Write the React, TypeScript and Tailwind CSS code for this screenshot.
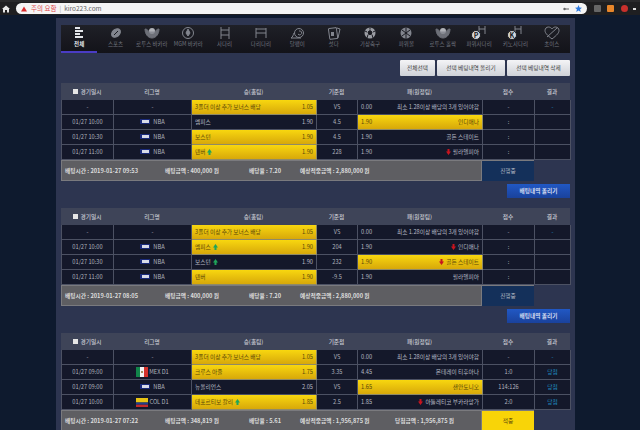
import React from "react";

type Row = {
  time: string;
  league: "NBA" | "MEX" | "COL" | "-";
  home: string;
  homeOdds: string;
  homeMark?: boolean;
  homePick?: boolean;
  line: string;
  awayOdds: string;
  away: string;
  awayMark?: boolean;
  awayPick?: boolean;
  score: string;
  result: string;
};

type Slip = {
  rows: Row[];
  placed: string;
  stake: string;
  rate: string;
  expected: string;
  won?: string;
  status: string;
  hit?: boolean;
};

const bonus: Row = {
  time: "-",
  league: "-",
  home: "3폴더 이상 추가 보너스 배당",
  homeOdds: "1.05",
  homePick: true,
  line: "VS",
  awayOdds: "0.00",
  away: "최소 1.28이상 배당의 3개 있어야함",
  score: "-",
  result: "-",
};

const slips: Slip[] = [
  {
    rows: [
      bonus,
      { time: "01/27 10:00", league: "NBA", home: "멤피스", homeOdds: "1.90", line: "4.5", awayOdds: "1.90", away: "인디애나", awayPick: true, score: ":", result: "" },
      { time: "01/27 10:30", league: "NBA", home: "보스턴", homeOdds: "1.90", homePick: true, line: "4.5", awayOdds: "1.90", away: "골든 스테이트", score: ":", result: "" },
      { time: "01/27 11:00", league: "NBA", home: "덴버", homeOdds: "1.90", homePick: true, homeMark: true, line: "228", awayOdds: "1.90", away: "필라델피아", awayMark: true, score: ":", result: "" },
    ],
    placed: "2019-01-27 09:53",
    stake: "400,000",
    rate: "7.20",
    expected: "2,880,000",
    status: "진행중",
  },
  {
    rows: [
      bonus,
      { time: "01/27 10:00", league: "NBA", home: "멤피스", homeOdds: "1.90", homePick: true, homeMark: true, line: "204", awayOdds: "1.90", away: "인디애나", awayMark: true, score: ":", result: "" },
      { time: "01/27 10:30", league: "NBA", home: "보스턴", homeOdds: "1.90", homeMark: true, line: "232", awayOdds: "1.90", away: "골든 스테이트", awayMark: true, awayPick: true, score: ":", result: "" },
      { time: "01/27 11:00", league: "NBA", home: "덴버", homeOdds: "1.90", homePick: true, line: "-9.5", awayOdds: "1.90", away: "필라델피아", score: ":", result: "" },
    ],
    placed: "2019-01-27 08:05",
    stake: "400,000",
    rate: "7.20",
    expected: "2,880,000",
    status: "진행중",
  },
  {
    rows: [
      bonus,
      { time: "01/27 09:00", league: "MEX", home: "크루스 아줄", homeOdds: "1.75", homePick: true, line: "3.35", awayOdds: "4.45", away: "몬테레이 티후아나", score: "1:0", result: "당첨" },
      { time: "01/27 09:00", league: "NBA", home: "뉴올리언스", homeOdds: "2.05", line: "VS", awayOdds: "1.65", away: "샌안토니오", awayPick: true, score: "114:126", result: "당첨" },
      { time: "01/27 10:00", league: "COL", home: "데포르티보 칼리", homeOdds: "1.85", homePick: true, homeMark: true, line: "2.5", awayOdds: "1.85", away: "아틀레티코 부카라망가", awayMark: true, score: "2:0", result: "당첨" },
    ],
    placed: "2019-01-27 07:22",
    stake: "348,819",
    rate: "5.61",
    expected: "1,956,875",
    won: "1,956,875",
    status: "적중",
    hit: true,
  },
];

const tabs = ["전체", "스포츠", "로투스 바카라", "MGM 바카라", "사다리", "다리다리", "달팽이", "섯다", "가상축구", "파워볼", "로투스 홀짝", "파워사다리", "키노사다리", "초이스"];

const columns = "grid grid-cols-[52px_78px_125px_41px_125px_52px_36px]";

function TabIcon({ i }: { i: number }) {
  const c = i === 0 ? "#e4e6ea" : "#82858e";
  const common = { width: 18, height: 14, viewBox: "0 0 18 14", fill: "none", stroke: c, strokeWidth: 1 };
  switch (i) {
    case 0:
      return (
        <svg {...common} strokeWidth={2}>
          <path d="M5 2h5M5 5h8M5 8h5M5 11h8" />
        </svg>
      );
    case 1:
      return (
        <svg {...common}>
          <ellipse cx="9" cy="7" rx="5" ry="3.6" fill={c} transform="rotate(-40 9 7)" />
          <path d="M7 9l4-4" stroke="#1a1b22" />
        </svg>
      );
    case 2:
    case 10:
      return (
        <svg {...common} width={20} viewBox="0 0 20 14">
          <circle cx="10" cy="5" r="3" fill="#b0b2b8" stroke="none" />
          <path d="M3 3c0 5 3 9 7 9s7-4 7-9c-2 0-3 1-4 3H7C6 4 5 3 3 3z" fill={c} opacity=".8" />
        </svg>
      );
    case 3:
      return (
        <svg {...common}>
          <circle cx="9" cy="7" r="5.5" />
          <path d="M9 3l2 4-2 3-2-3z" fill={c} />
        </svg>
      );
    case 4:
      return (
        <svg {...common}>
          <path d="M5 1v12M13 1v12M5 4h8M5 9h8" />
        </svg>
      );
    case 5:
      return (
        <svg {...common}>
          <path d="M4 2v10M14 2v10M4 7h10M4 3h10" />
        </svg>
      );
    case 6:
      return (
        <svg {...common}>
          <circle cx="11" cy="7" r="4.5" />
          <path d="M3 12h10M3 12c2-1 2-3 3-5M11 5a2 2 0 1 1-1 3" />
        </svg>
      );
    case 7:
      return (
        <svg {...common}>
          <rect x="4" y="2" width="8" height="11" rx="1" transform="rotate(-8 8 7)" />
          <path d="M12 2l3 1-2 9" />
          <path d="M6 6h3v4H6z" fill={c} stroke="none" />
        </svg>
      );
    case 8:
      return (
        <svg {...common}>
          <circle cx="9" cy="7" r="5.5" fill="#9a9ca3" stroke="none" />
          <path d="M9 4.500l2 1.500-.8 2.400H7.800L7 6zM9 1.600v2M4 5l2 1M14 5l-2 1M6 12l1-3.400M12 12l-1-3.400" stroke="#1a1b22" fill="#1a1b22" />
        </svg>
      );
    case 9:
      return (
        <svg {...common}>
          <circle cx="9" cy="7" r="5.5" fill={c} stroke="none" />
          <path d="M5 4l8 6M13 4l-8 6M9 1.500v11" stroke="#1a1b22" />
        </svg>
      );
    case 11:
    case 12:
      return (
        <svg {...common}>
          <path d="M9 0v8M15 0v8M9 3h6" />
          <circle cx="6" cy="9" r="4.500" fill="#d4d6da" stroke="#1a1b22" />
          <text x="6" y="11.500" fontSize="7" fontWeight="700" fill="#1a1b22" stroke="none" textAnchor="middle">
            {i === 11 ? "P" : "K"}
          </text>
        </svg>
      );
    default:
      return (
        <svg {...common}>
          <path d="M9 13C4 9 2 7 2 4.500 2 2.500 3.500 1 5.500 1 7 1 8.300 2 9 3c.7-1 2-2 3.500-2C14.500 1 16 2.500 16 4.500 16 7 14 9 9 13z" />
          <path d="M4 11l10-9" />
        </svg>
      );
  }
}

function LeagueBadge({ league }: { league: Row["league"] }) {
  if (league === "-") return <span>-</span>;
  if (league === "NBA") {
    return (
      <span className="flex items-center gap-[3px]">
        <span className="flex h-[5px] w-[10px] items-center justify-center bg-[#1a2a7a]">
          <span className="h-[3px] w-[7px] bg-[#d8dbe8]" />
        </span>
        <span>NBA</span>
      </span>
    );
  }
  return (
    <span className="flex items-center gap-[1px]">
      {league === "MEX" ? (
        <svg width="12" height="10" viewBox="0 0 12 10">
          <rect width="4" height="10" fill="#12854a" />
          <rect x="4" width="4" height="10" fill="#f2f2f2" />
          <rect x="8" width="4" height="10" fill="#d4322c" />
          <circle cx="6" cy="5" r="1" fill="#8a6a2a" />
        </svg>
      ) : (
        <svg width="12" height="9" viewBox="0 0 12 9">
          <rect width="12" height="4.500" fill="#e8c414" />
          <rect y="4.500" width="12" height="2.200" fill="#1f3f8f" />
          <rect y="6.700" width="12" height="2.300" fill="#c22a2a" />
        </svg>
      )}
      <span>{league === "MEX" ? "MEX D1" : "COL D1"}</span>
    </span>
  );
}

const UpMark = () => (
  <svg width="5" height="6" viewBox="0 0 5 6" className="shrink-0">
    <path d="M2.500 0L5 3.500H3.500V6h-2V3.500H0z" fill="#1fa45a" />
  </svg>
);

const DownMark = () => (
  <svg width="5" height="6" viewBox="0 0 5 6" className="shrink-0">
    <path d="M2.500 6L5 2.500H3.500V0h-2v2.500H0z" fill="#c8141e" />
  </svg>
);

function PickCell({ side, name, odds, mark, pick }: { side: "home" | "away"; name: string; odds: string; mark?: boolean; pick?: boolean }) {
  const tone = pick
    ? "bg-gradient-to-b from-[#f8d70f] to-[#d7a80a] text-[#5a4708] border-[#8f8a66]"
    : "bg-[#14182a] text-[#b8bbc5] border-[#4c5163]";
  return (
    <div className={`flex items-center justify-between border-r border-b px-[3px] ${tone}`}>
      {side === "home" ? (
        <>
          <span className="flex items-center gap-[2px] whitespace-nowrap">
            {name}
            {mark && <UpMark />}
          </span>
          <span>{odds}</span>
        </>
      ) : (
        <>
          <span>{odds}</span>
          <span className="flex items-center gap-[2px] whitespace-nowrap">
            {mark && <DownMark />}
            {name}
          </span>
        </>
      )}
    </div>
  );
}

function Cell({ children }: { children?: React.ReactNode }) {
  return <div className="flex items-center justify-center border-r border-b border-[#4c5163] bg-[#14182a] whitespace-nowrap">{children}</div>;
}

function SlipTable({ slip }: { slip: Slip }) {
  return (
    <section className="text-[5.7px] leading-none text-[#b0b3bd]">
      <div className={`${columns} h-[17px] bg-[#3e4458] font-medium text-[#c8cad2]`}>
        <div className="flex items-center justify-center gap-[3px]">
          <span className="h-[5px] w-[5px] bg-[#e6e6e6]" />
          경기일시
        </div>
        <div className="flex items-center justify-center">리그명</div>
        <div className="flex items-center justify-center">승(홈팀)</div>
        <div className="flex items-center justify-center">기준점</div>
        <div className="flex items-center justify-center">패(원정팀)</div>
        <div className="flex items-center justify-center">점수</div>
        <div className="flex items-center justify-center">결과</div>
      </div>
      {slip.rows.map((r, i) => (
        <div key={i} className={`${columns} h-[15px] border-l border-[#4c5163]`}>
          <Cell>{r.time}</Cell>
          <Cell>
            <LeagueBadge league={r.league} />
          </Cell>
          <PickCell side="home" name={r.home} odds={r.homeOdds} mark={r.homeMark} pick={r.homePick} />
          <Cell>{r.line}</Cell>
          <PickCell side="away" name={r.away} odds={r.awayOdds} mark={r.awayMark} pick={r.awayPick} />
          <Cell>{r.score}</Cell>
          <Cell>
            <span className="text-[#1f8fc4]">{r.result}</span>
          </Cell>
        </div>
      ))}
      <div className={`${columns} h-[21px]`}>
        <div className="col-span-5 flex items-center border border-[#7a7a7e] bg-[#5e5e62] font-bold text-[#dcdcdc] whitespace-nowrap">
          <span className="w-[102px] pl-[3px]">배팅시간 : {slip.placed}</span>
          <span className="w-[85px] pl-[1px]">배팅금액 : {slip.stake} 원</span>
          <span className="w-[51px]">배당율 : {slip.rate}</span>
          <span className="w-[95px]">예상적중금액 : {slip.expected} 원</span>
          {slip.won && <span>당첨금액 : {slip.won} 원</span>}
        </div>
        <div className={`flex items-center justify-center border-t border-[#7a7a7e] ${slip.hit ? "bg-[#f8d408] text-[#5a4708]" : "bg-[#14305a] text-[#b8bbc5]"}`}>{slip.status}</div>
      </div>
    </section>
  );
}

function BrowserBar() {
  return (
    <header className="flex h-[15px] shrink-0 items-center border-t-2 border-[#2a2a2c] bg-[#1f1f21]">
      <svg width="8" height="8" viewBox="0 0 8 8" className="ml-[2px]">
        <path d="M4 .5L8 4H7v3.500H5V5H3v2.500H1V4H0z" fill="#e8e8e8" />
      </svg>
      <div className="ml-[6px] flex h-[11px] w-[571px] items-center rounded-full bg-[#f5f5f5] text-[6.500px] leading-none">
        <svg width="6" height="6" viewBox="0 0 7 6" className="ml-[5px]">
          <path d="M3.500 0L7 6H0z" fill="#d92b2b" />
        </svg>
        <span className="ml-[4px] text-[#e04a4a]">주의 요함</span>
        <span className="ml-[3px] text-[#aaa]">|</span>
        <span className="ml-[3px] text-[#666]">kiro223.com</span>
        <svg width="6" height="4" viewBox="0 0 6 4" className="ml-auto">
          <circle cx="1.500" cy="2" r="1.200" fill="#666" />
          <path d="M2 2h4" stroke="#666" />
        </svg>
        <svg width="7" height="7" viewBox="0 0 7 7" className="ml-[6px] mr-[5px]">
          <path d="M3.500 0l1 2.400L7 2.700 5.100 4.300 5.700 7 3.500 5.500 1.300 7l.6-2.700L0 2.700l2.500-.3z" fill="#2f7be0" />
        </svg>
      </div>
      <span className="ml-[7px] h-[7px] w-[7px] rounded-[1px] bg-[#666]" />
      <span className="ml-[6px] h-[7px] w-[7px] rounded-[1px] bg-[#e8862a]" />
      <span className="ml-[7px] h-[7px] w-[7px] rounded-full bg-[#c9302c]" />
      <span className="ml-[5px] h-[2px] w-[3px] bg-[#ddd]" />
    </header>
  );
}

export default function App() {
  return (
    <div className="flex h-[430px] w-[640px] flex-col overflow-hidden bg-[#0e1a2e] font-['Noto_Sans_CJK_KR',sans-serif]">
      <BrowserBar />
      <main className="ml-[56px] mt-[3px] flex w-[519px] flex-1 flex-col overflow-hidden bg-[#2d3550] px-[5px] pt-[7px]">
        <nav className="grid h-[28px] shrink-0 grid-cols-14 bg-gradient-to-b from-[#1f2027] to-[#131319]">
          {tabs.map((t, i) => (
            <div key={t} className={`flex flex-col items-center border-b-2 pt-[1px] text-[5.500px] leading-none whitespace-nowrap ${i === 0 ? "border-[#4a3cc4] font-bold text-[#e4e6ea]" : "border-transparent text-[#70737d]"}`}>
              <TabIcon i={i} />
              <span className="mt-[2px]">{t}</span>
            </div>
          ))}
        </nav>
        <div className="mt-[7px] mb-[7px] flex shrink-0 justify-end gap-[2px]">
          {["전체선택", "선택 베팅내역 올리기", "선택 베팅내역 삭제"].map((b, i) => (
            <button key={b} className={`h-[16px] rounded-[1px] bg-gradient-to-b from-[#f4f4f6] to-[#cfd2d8] text-[5.700px] leading-none text-[#444] ${["w-[35px]", "w-[68px]", "w-[63px]"][i]}`}>
              {b}
            </button>
          ))}
        </div>
        {slips.map((s, i) => (
          <div key={i} className="shrink-0">
            <SlipTable slip={s} />
            {i < 2 && (
              <div className="mt-[3px] mb-[10px] flex justify-end">
                <button className="h-[14px] w-[63px] bg-gradient-to-b from-[#2158c4] to-[#1a429c] text-[5.700px] leading-none font-bold text-[#d5dcf0]">배팅내역 올리기</button>
              </div>
            )}
          </div>
        ))}
      </main>
    </div>
  );
}
